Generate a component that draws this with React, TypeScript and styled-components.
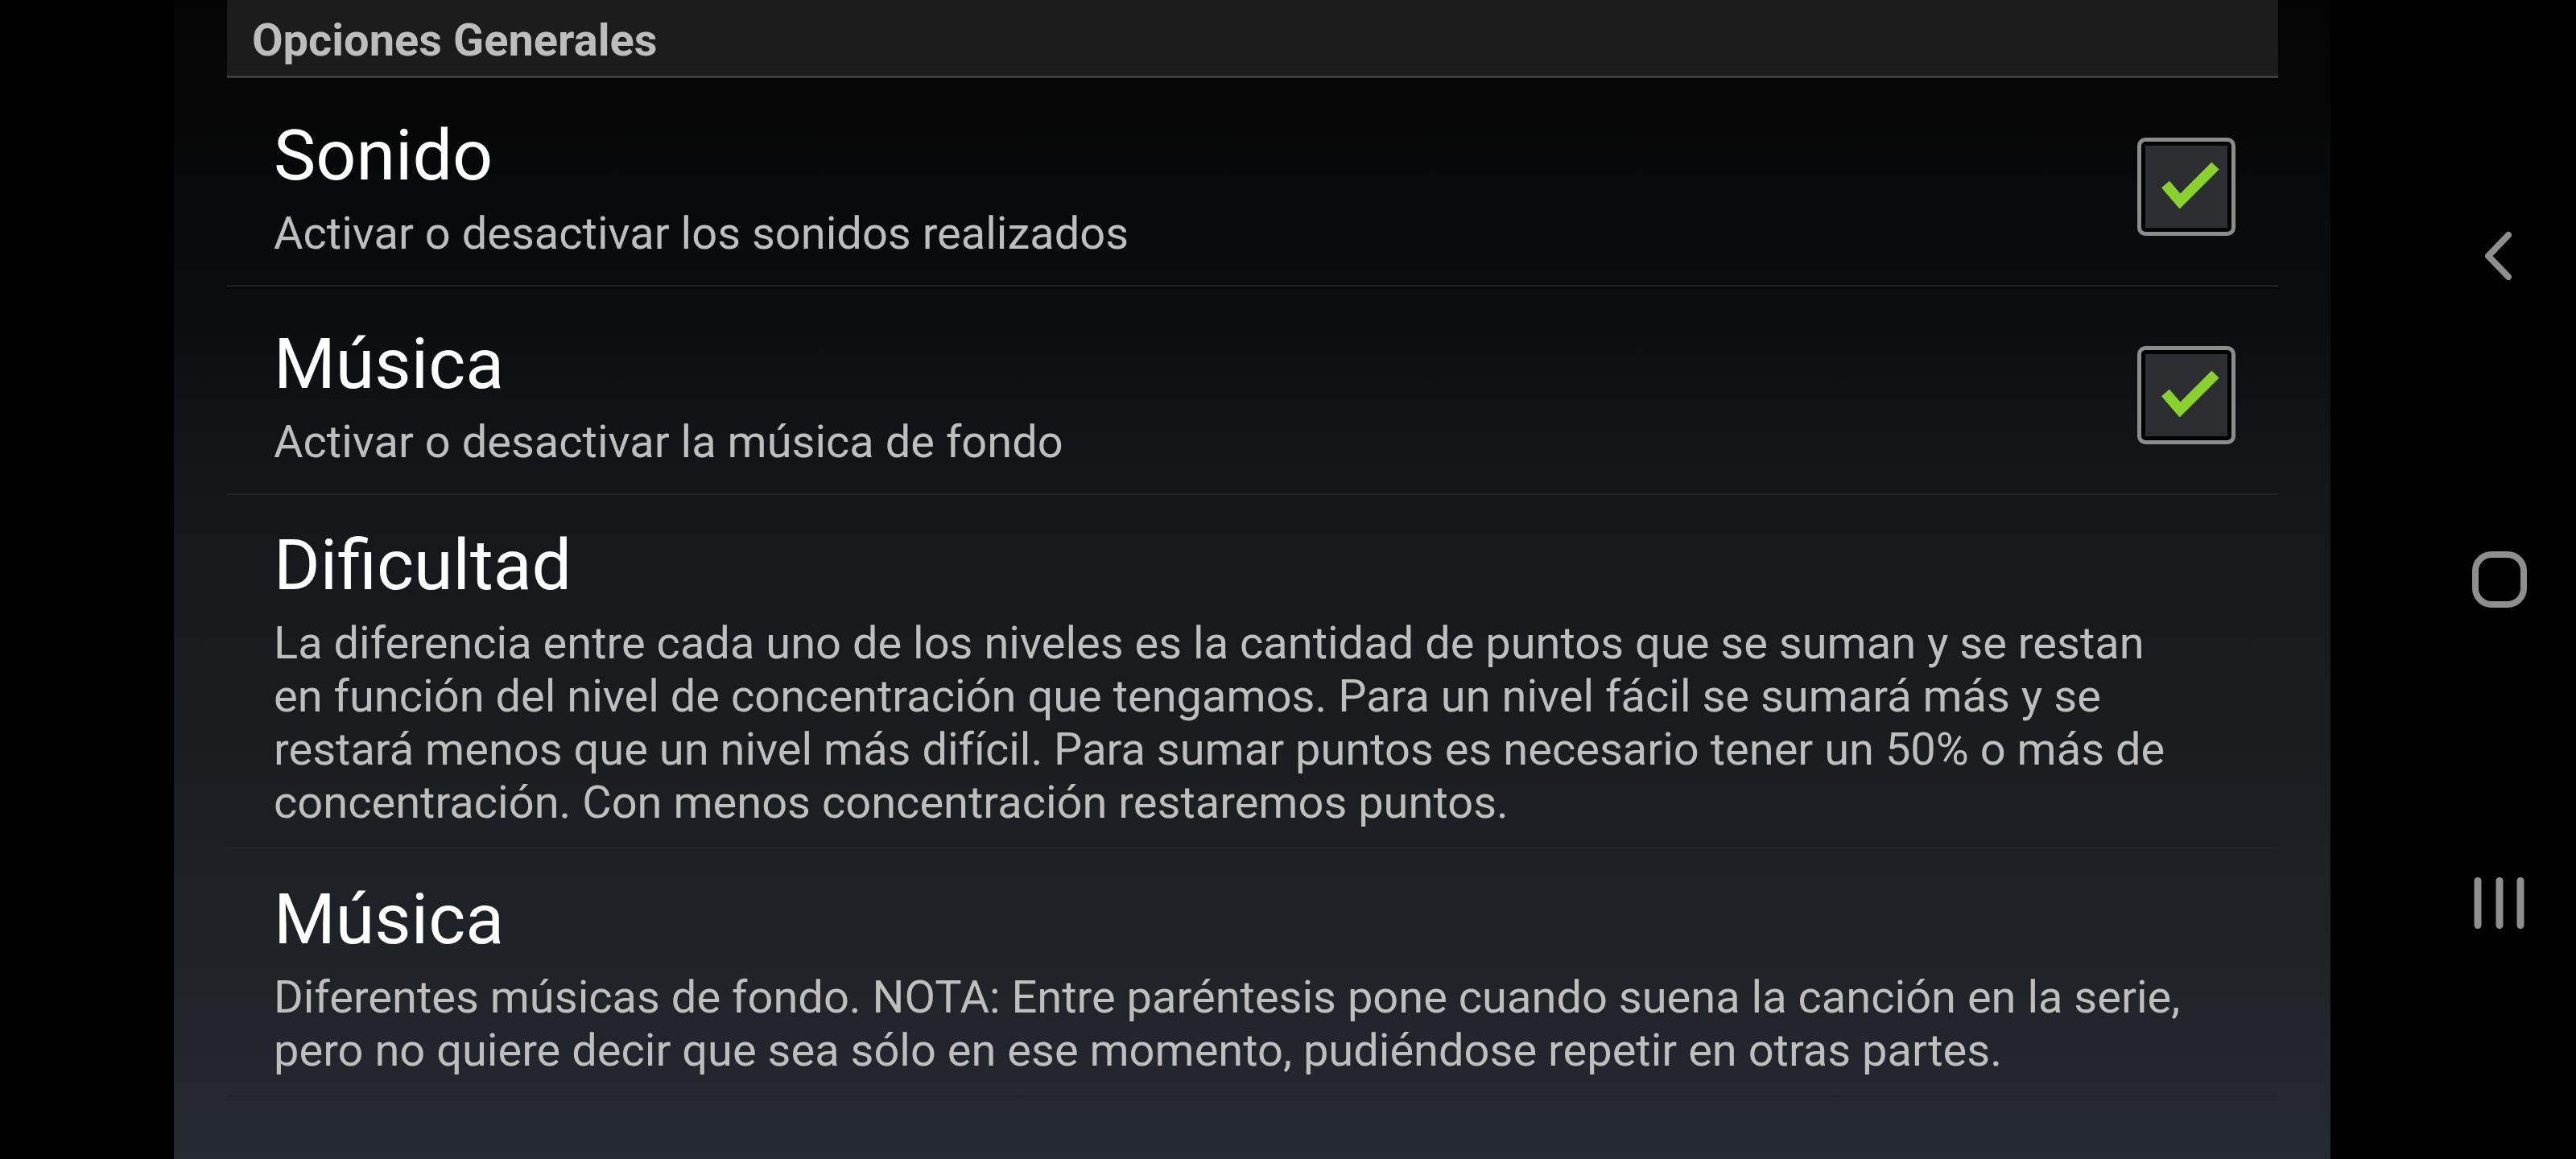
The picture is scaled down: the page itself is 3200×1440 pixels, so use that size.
import styled, { createGlobalStyle } from 'styled-components';

const GlobalStyle = createGlobalStyle`
  html, body {
    margin: 0;
    padding: 0;
    background: #000;
  }
  body {
    font-family: Roboto, "Noto Sans", "Liberation Sans", sans-serif;
  }
  #root {
    width: 3200px;
    height: 1440px;
    overflow: hidden;
  }
`

const Screen = styled.div`
  display: flex;
  flex-direction: row;
  width: 3200px;
  height: 1440px;
  background: #000;
`
const Gutter = styled.div`
  width: 216px;
  flex-shrink: 0;
  background: #000;
`
const Panel = styled.main`
  width: 2679px;
  flex-shrink: 0;
  box-sizing: border-box;
  padding: 0 65px 0 66px;
  display: flex;
  flex-direction: column;
  background: linear-gradient(
    180deg,
    #040404 0%,
    #0b0c0e 26%,
    #141619 42%,
    #17191c 51%,
    #1d2024 75%,
    #23272d 93%,
    #262a31 100%
  );
`
const Header = styled.div`
  height: 97px;
  box-sizing: border-box;
  padding: 17px 0 0 31px;
  background: #1c1c1c;
  border-bottom: 3px solid #3b3b3b;
  font-size: 56px;
  line-height: 66px;
  font-weight: 700;
  color: #bdbdbd;
`
const Row = styled.div`
  display: flex;
  flex-direction: row;
  align-items: center;
  min-height: 259px;
  box-sizing: border-box;
  padding: 35px 53px 23px 58px;
  border-bottom: 2px solid #212225;
`
const TextBlock = styled.div`
  flex: 1;
  min-width: 0;
  margin-right: 50px;
`
const Title = styled.div`
  font-size: 88px;
  line-height: 103px;
  color: #ffffff;
`
const Summary = styled.div`
  margin-top: 13px;
  font-size: 56px;
  line-height: 66px;
  color: #bebebe;
`
const CheckBox = styled.div`
  width: 122px;
  height: 122px;
  flex-shrink: 0;
  box-sizing: border-box;
  border: 5px solid #8c8c8c;
  border-radius: 10px;
  background: #2d2e31;
  box-shadow: inset 0 0 0 5px #030303;
  display: flex;
`
const Nav = styled.nav`
  width: 305px;
  flex-shrink: 0;
  box-sizing: border-box;
  padding-left: 115px;
  background: #000;
  display: flex;
  flex-direction: column;
  align-items: center;
  justify-content: center;
  gap: 322px;
`
const NavButton = styled.div`
  width: 80px;
  height: 80px;
  display: flex;
`

type Pref = { title: string; summary: string; checked?: boolean };

const prefs: Pref[] = [
  { title: 'Sonido', summary: 'Activar o desactivar los sonidos realizados', checked: true },
  { title: 'Música', summary: 'Activar o desactivar la música de fondo', checked: true },
  {
    title: 'Dificultad',
    summary:
      'La diferencia entre cada uno de los niveles es la cantidad de puntos que se suman y se restan en función del nivel de concentración que tengamos. Para un nivel fácil se sumará más y se restará menos que un nivel más difícil. Para sumar puntos es necesario tener un 50% o más de concentración. Con menos concentración restaremos puntos.',
  },
  {
    title: 'Música',
    summary:
      'Diferentes músicas de fondo. NOTA: Entre paréntesis pone cuando suena la canción en la serie, pero no quiere decir que sea sólo en ese momento, pudiéndose repetir en otras partes.',
  },
];

function Check() {
  return (
    <CheckBox>
      <svg width="112" height="112" viewBox="0 0 112 112">
        <polyline
          points="30,53 48,74 92,30"
          fill="none"
          stroke="#87d32b"
          strokeWidth="13"
          strokeLinejoin="miter"
        />
      </svg>
    </CheckBox>
  );
}

export default function App() {
  return (
    <>
      <GlobalStyle />
      <Screen>
        <Gutter />
        <Panel>
          <Header>Opciones Generales</Header>
          {prefs.map((p, i) => (
            <Row key={i}>
              <TextBlock>
                <Title>{p.title}</Title>
                <Summary>{p.summary}</Summary>
              </TextBlock>
              {p.checked && <Check />}
            </Row>
          ))}
        </Panel>
        <Nav>
          <NavButton>
            <svg width="80" height="80" viewBox="0 0 80 80">
              <polyline points="51,14 26,40 51,66" fill="none" stroke="#8e8e8e" strokeWidth="8" strokeLinecap="round" strokeLinejoin="round" />
            </svg>
          </NavButton>
          <NavButton>
            <svg width="80" height="80" viewBox="0 0 80 80">
              <rect x="10" y="9" width="60" height="62" rx="20" fill="none" stroke="#8e8e8e" strokeWidth="8" />
            </svg>
          </NavButton>
          <NavButton>
            <svg width="80" height="80" viewBox="0 0 80 80">
              <g stroke="#8e8e8e" strokeWidth="9" strokeLinecap="round">
                <line x1="13" y1="12.5" x2="13" y2="67.5" />
                <line x1="40" y1="12.5" x2="40" y2="67.5" />
                <line x1="66" y1="12.5" x2="66" y2="67.5" />
              </g>
            </svg>
          </NavButton>
        </Nav>
      </Screen>
    </>
  );
}
